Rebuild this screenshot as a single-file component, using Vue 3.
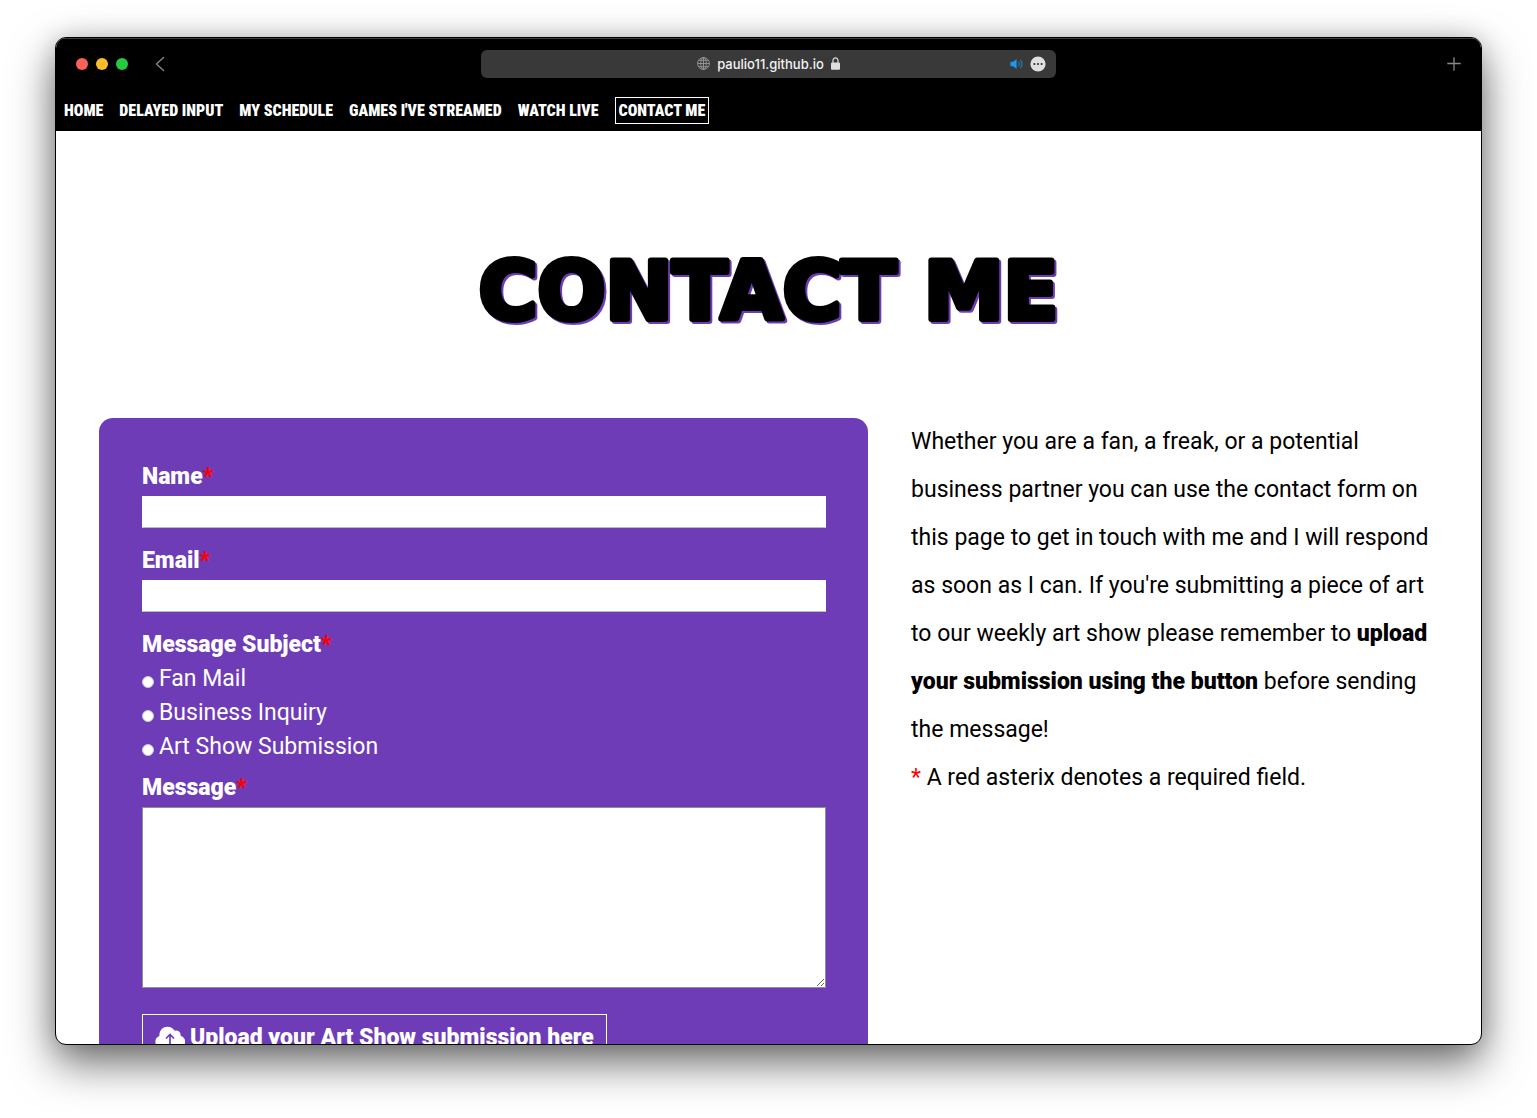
<script setup>
import { ref } from 'vue'

const links = ['Home', 'Delayed Input', 'My Schedule', "Games I've Streamed", 'Watch Live', 'Contact Me']
const current = 'Contact Me'
const subjects = ['Fan Mail', 'Business Inquiry', 'Art Show Submission']

const name = ref('')
const email = ref('')
const subject = ref('')
const message = ref('')
</script>

<template>
  <div class="desktop">
    <div class="window">
      <header class="toolbar">
        <div class="side">
          <span class="light red"></span>
          <span class="light yellow"></span>
          <span class="light green"></span>
          <button class="icon-button back" type="button" aria-label="Back">
            <svg width="10" height="16" viewBox="0 0 10 16" fill="none" stroke="#858585" stroke-width="1.4" stroke-linecap="round" stroke-linejoin="round"><path d="M8.5 1.5 1.5 8l7 6.5" /></svg>
          </button>
        </div>
        <div class="address">
          <div class="site">
            <svg width="13" height="13" viewBox="0 0 13 13" fill="none" stroke="#9a9a9a" stroke-width="0.9"><circle cx="6.5" cy="6.5" r="5.9" /><ellipse cx="6.5" cy="6.5" rx="2.8" ry="5.9" /><path d="M6.5.6v11.8M.6 6.5h11.8M1.6 3.3h9.8M1.6 9.7h9.8" /></svg>
            <span>paulio11.github.io</span>
            <svg width="9" height="13" viewBox="0 0 9 13"><path d="M2 6V3.6a2.5 2.7 0 0 1 5 0V6" fill="none" stroke="#dedede" stroke-width="1.2" /><rect x="0" y="5.5" width="9" height="7.3" rx="1" fill="#dedede" /></svg>
          </div>
          <div class="actions">
            <button class="icon-button" type="button" aria-label="Mute tab">
              <svg width="14" height="12" viewBox="0 0 14 12"><path d="M0.5 3.8h2.7L6.6 1v10L3.2 8.2H.5z" fill="#1f97f4" /><path d="M8.6 4.1q1.5 1.9 0 3.8M10.6 2.4q3 3.6 0 7.2" fill="none" stroke="#1c7ec9" stroke-width="1.1" stroke-linecap="round" /></svg>
            </button>
            <button class="icon-button" type="button" aria-label="Page menu">
              <svg width="16" height="16" viewBox="0 0 16 16"><circle cx="8" cy="8" r="7.6" fill="#dfdfdf" /><g fill="#333"><circle cx="4.4" cy="8" r="1.1" /><circle cx="8" cy="8" r="1.1" /><circle cx="11.6" cy="8" r="1.1" /></g></svg>
            </button>
          </div>
        </div>
        <div class="side end">
          <button class="icon-button" type="button" aria-label="New tab">
            <svg width="14" height="14" viewBox="0 0 14 14" stroke="#8a8a8a" stroke-width="1.3"><path d="M7 .3v13.4M.3 6.5h13.4" /></svg>
          </button>
        </div>
      </header>

      <nav class="menu">
        <a v-for="link in links" :key="link" href="#" :class="{ current: link === current }">{{ link }}</a>
      </nav>

      <main>
        <h1>
          <svg width="100%" height="100"><text x="50%" y="79">CONTACT ME</text></svg>
        </h1>
        <div class="columns">
          <form class="contact" @submit.prevent>
            <label class="title" for="name">Name<span class="star">*</span></label>
            <input id="name" v-model="name" class="field" type="text" required />
            <label class="title" for="email">Email<span class="star">*</span></label>
            <input id="email" v-model="email" class="field" type="email" required />
            <fieldset>
              <legend class="title">Message Subject<span class="star">*</span></legend>
              <label v-for="item in subjects" :key="item" class="choice">
                <input v-model="subject" type="radio" name="subject" :value="item" required />
                <span>{{ item }}</span>
              </label>
            </fieldset>
            <label class="title" for="message">Message<span class="star">*</span></label>
            <textarea id="message" v-model="message" required></textarea>
            <button class="upload" type="button">
              <svg width="30" height="24" viewBox="0 0 30 24"><path d="M7 23a6.8 6.8 0 0 1-2.6-13C4 4.500 8 .7 12.500 .7c3 0 5.600 1.500 7 4 3.500-1.200 6.700 1.300 6 5A6.800 6.800 0 0 1 23.500 23z" fill="#fff" /><path d="M15 20V8.500M11 12.500 15 8.500l4 4" fill="none" stroke="#6e3cb6" stroke-width="1.7" /></svg>
              <span>Upload your Art Show submission here</span>
            </button>
          </form>
          <section class="intro">
            <p>
              Whether you are a fan, a freak, or a potential business partner you can use the contact form on
              this page to get in touch with me and I will respond as soon as I can. If you're submitting a
              piece of art to our weekly art show please remember to
              <strong>upload your submission using the button</strong> before sending the message!
            </p>
            <p><span class="star">*</span> A red asterix denotes a required field.</p>
          </section>
        </div>
      </main>
    </div>
  </div>
</template>

<style>
body {
  margin: 0;
  background: #fff;
}
</style>

<style scoped>
* {
  box-sizing: border-box;
}

.desktop {
  display: flex;
  height: 100vh;
  padding: 37px 55px 73px;
  overflow: hidden;
  font-family: Roboto, "Liberation Sans", sans-serif;
}

.window {
  flex: 1;
  min-width: 0;
  overflow: hidden;
  border: 1px solid #000;
  border-radius: 11px;
  background: #fff;
  box-shadow: 0 18px 44px rgba(0, 0, 0, 0.58), 0 0 24px rgba(0, 0, 0, 0.14);
}

.toolbar {
  display: grid;
  grid-template-columns: 1fr 575px 1fr;
  align-items: center;
  height: 50px;
  padding: 0 20px;
  border-top: 1px solid #3d3d3d;
  background: #000;
}

.side {
  display: flex;
  align-items: center;
  gap: 8px;
}

.end {
  justify-content: flex-end;
}

.light {
  width: 12px;
  height: 12px;
  border-radius: 50%;
}

.red {
  background: #ff5f57;
}

.yellow {
  background: #febc2e;
}

.green {
  background: #28c840;
}

.icon-button {
  display: flex;
  padding: 0;
  border: 0;
  background: none;
}

.back {
  margin-left: 19px;
}

.address {
  display: grid;
  grid-template-columns: 1fr auto 1fr;
  align-items: center;
  height: 28px;
  padding: 0 10px;
  border-radius: 6px;
  background: #393939;
}

.site {
  display: flex;
  grid-column: 2;
  align-items: center;
  gap: 7px;
  color: #f2f2f2;
  font-family: Inter, sans-serif;
  font-size: 13px;
  font-weight: 500;
}

.actions {
  display: flex;
  align-items: center;
  justify-content: flex-end;
  gap: 6px;
}

.menu {
  display: flex;
  align-items: center;
  gap: 16px;
  height: 43px;
  padding: 2px 8px 0;
  background: #000;
}

.menu a {
  color: #fff;
  font-family: "Roboto Condensed", Lato, sans-serif;
  font-size: 16px;
  font-weight: 900;
  line-height: 25px;
  text-decoration: none;
  text-transform: uppercase;
  white-space: nowrap;
}

.menu .current {
  padding: 0 3px;
  border: 1px solid #fff;
}

h1 {
  margin: 0;
  padding: 109px 0 78px;
}

h1 svg {
  display: block;
  filter: drop-shadow(2px 2px 0 #6e3cb6);
}

h1 text {
  fill: #000;
  font-family: "DejaVu Sans", sans-serif;
  font-size: 80px;
  font-weight: 700;
  stroke: #000;
  stroke-linejoin: round;
  stroke-width: 6px;
  text-anchor: middle;
}

.columns {
  display: grid;
  grid-template-columns: 54fr 37fr;
  gap: 43px;
  align-items: start;
  padding: 0 43px;
}

.contact {
  display: flex;
  flex-direction: column;
  padding: 44px 42px 43px 43px;
  border-radius: 14px;
  background: #6e3cb6;
  color: #fff;
  font-size: 23px;
}

.title {
  margin-bottom: 4px;
  padding: 0;
  font-weight: 900;
  line-height: 30px;
}

.star {
  color: #f00;
}

.field {
  height: 32px;
  margin: 0 0 18px;
  padding: 0 8px;
  border: 1px solid #fff;
  border-bottom-color: #bbb;
  background: #fff;
  font: inherit;
}

fieldset {
  min-width: 0;
  margin: 0 0 9px;
  padding: 0;
  border: 0;
}

legend.title {
  margin-bottom: 2px;
}

.choice {
  display: flex;
  align-items: center;
  gap: 5px;
  line-height: 34px;
}

.choice input {
  appearance: none;
  width: 12px;
  height: 12px;
  margin: 6px 0 0;
  border: 1px solid #c9c9c9;
  border-radius: 50%;
  background: #fff;
}

.choice input:checked {
  border: 4px solid #fff;
  background: #000;
}

textarea {
  height: 181px;
  margin: 0 0 26px;
  padding: 8px;
  border: 1px solid #8f8f8f;
  border-radius: 0;
  background: #fff;
  font: inherit;
  resize: both;
}

.upload {
  display: flex;
  align-items: center;
  align-self: flex-start;
  gap: 5px;
  padding: 6px 12px;
  border: 1px solid #fff;
  background: none;
  color: #fff;
  font: inherit;
  font-weight: 900;
  line-height: 34px;
  white-space: nowrap;
}

.intro {
  color: #000;
  font-size: 23px;
  line-height: 48px;
}

.intro p {
  margin: 0;
}

.intro strong {
  font-weight: 900;
}
</style>
